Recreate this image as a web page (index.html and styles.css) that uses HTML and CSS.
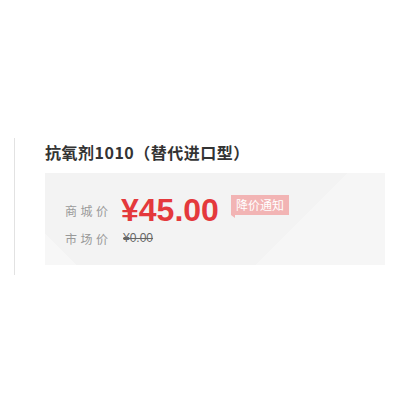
FILE: index.html
```html
<!DOCTYPE html>
<html lang="zh-CN">
<head>
    <meta charset="UTF-8">
    <meta name="viewport" content="width=device-width, initial-scale=1.0">
    <title>抗氧剂1010</title>
    <link rel="stylesheet" href="styles.css">
</head>
<body>
    <div class="product">
        <h1 class="product-title">抗氧剂1010（替代进口型）</h1>
        <div class="price-box">
            <div class="price-row">
                <span class="label">商城价</span>
                <span class="price">¥45.00</span>
                <a href="#" class="notice">降价通知</a>
            </div>
            <div class="market-row">
                <span class="label">市场价</span>
                <span class="market-price">¥0.00</span>
            </div>
        </div>
    </div>
</body>
</html>
```

FILE: styles.css
```css
body {
    margin: 0;
    background-color: #ffffff;
    font-family: "Noto Sans CJK SC", "Noto Sans", sans-serif;
}
.product {
    margin: 138px 0 0 14px;
    border-left: 1px solid #e2e2e2;
    padding: 2px 15px 10px 30px;
}
.product-title {
    margin: 0;
    font-size: 16px;
    line-height: 24px;
    font-weight: bold;
    letter-spacing: 0.5px;
    color: #333;
}
.price-box {
    margin-top: 9px;
    height: 92px;
    box-sizing: border-box;
    padding: 19px 0 0 20px;
    background-color: #f3f3f3;
    background-image:
        linear-gradient(45deg, #f7f7f7 0, #f7f7f7 22px, transparent 22px),
        linear-gradient(135deg, transparent 0, transparent 70%, #f6f6f6 70%, #f6f6f6 100%);
}
.price-row {
    display: flex;
    align-items: center;
    height: 36px;
}
.market-row {
    display: flex;
    align-items: center;
    height: 20px;
}
.label {
    width: 56px;
    font-size: 12px;
    letter-spacing: 3.5px;
    color: #999;
}
.price {
    font-family: "Liberation Sans", Arial, sans-serif;
    font-size: 32px;
    font-weight: bold;
    color: #e4393c;
}
.notice {
    position: relative;
    margin: 0 0 10px 12px;
    padding: 0 5px;
    height: 20px;
    line-height: 20px;
    font-size: 12px;
    color: #fff;
    text-decoration: none;
    background-color: #f2b4b4;
}
.notice::after {
    content: "";
    position: absolute;
    left: 0;
    bottom: -3px;
    border-top: 3px solid #f2b4b4;
    border-left: 4px solid transparent;
}
.market-price {
    margin-left: 2px;
    font-family: "Liberation Sans", Arial, sans-serif;
    font-size: 12px;
    color: #666;
    text-decoration: line-through;
}
```
